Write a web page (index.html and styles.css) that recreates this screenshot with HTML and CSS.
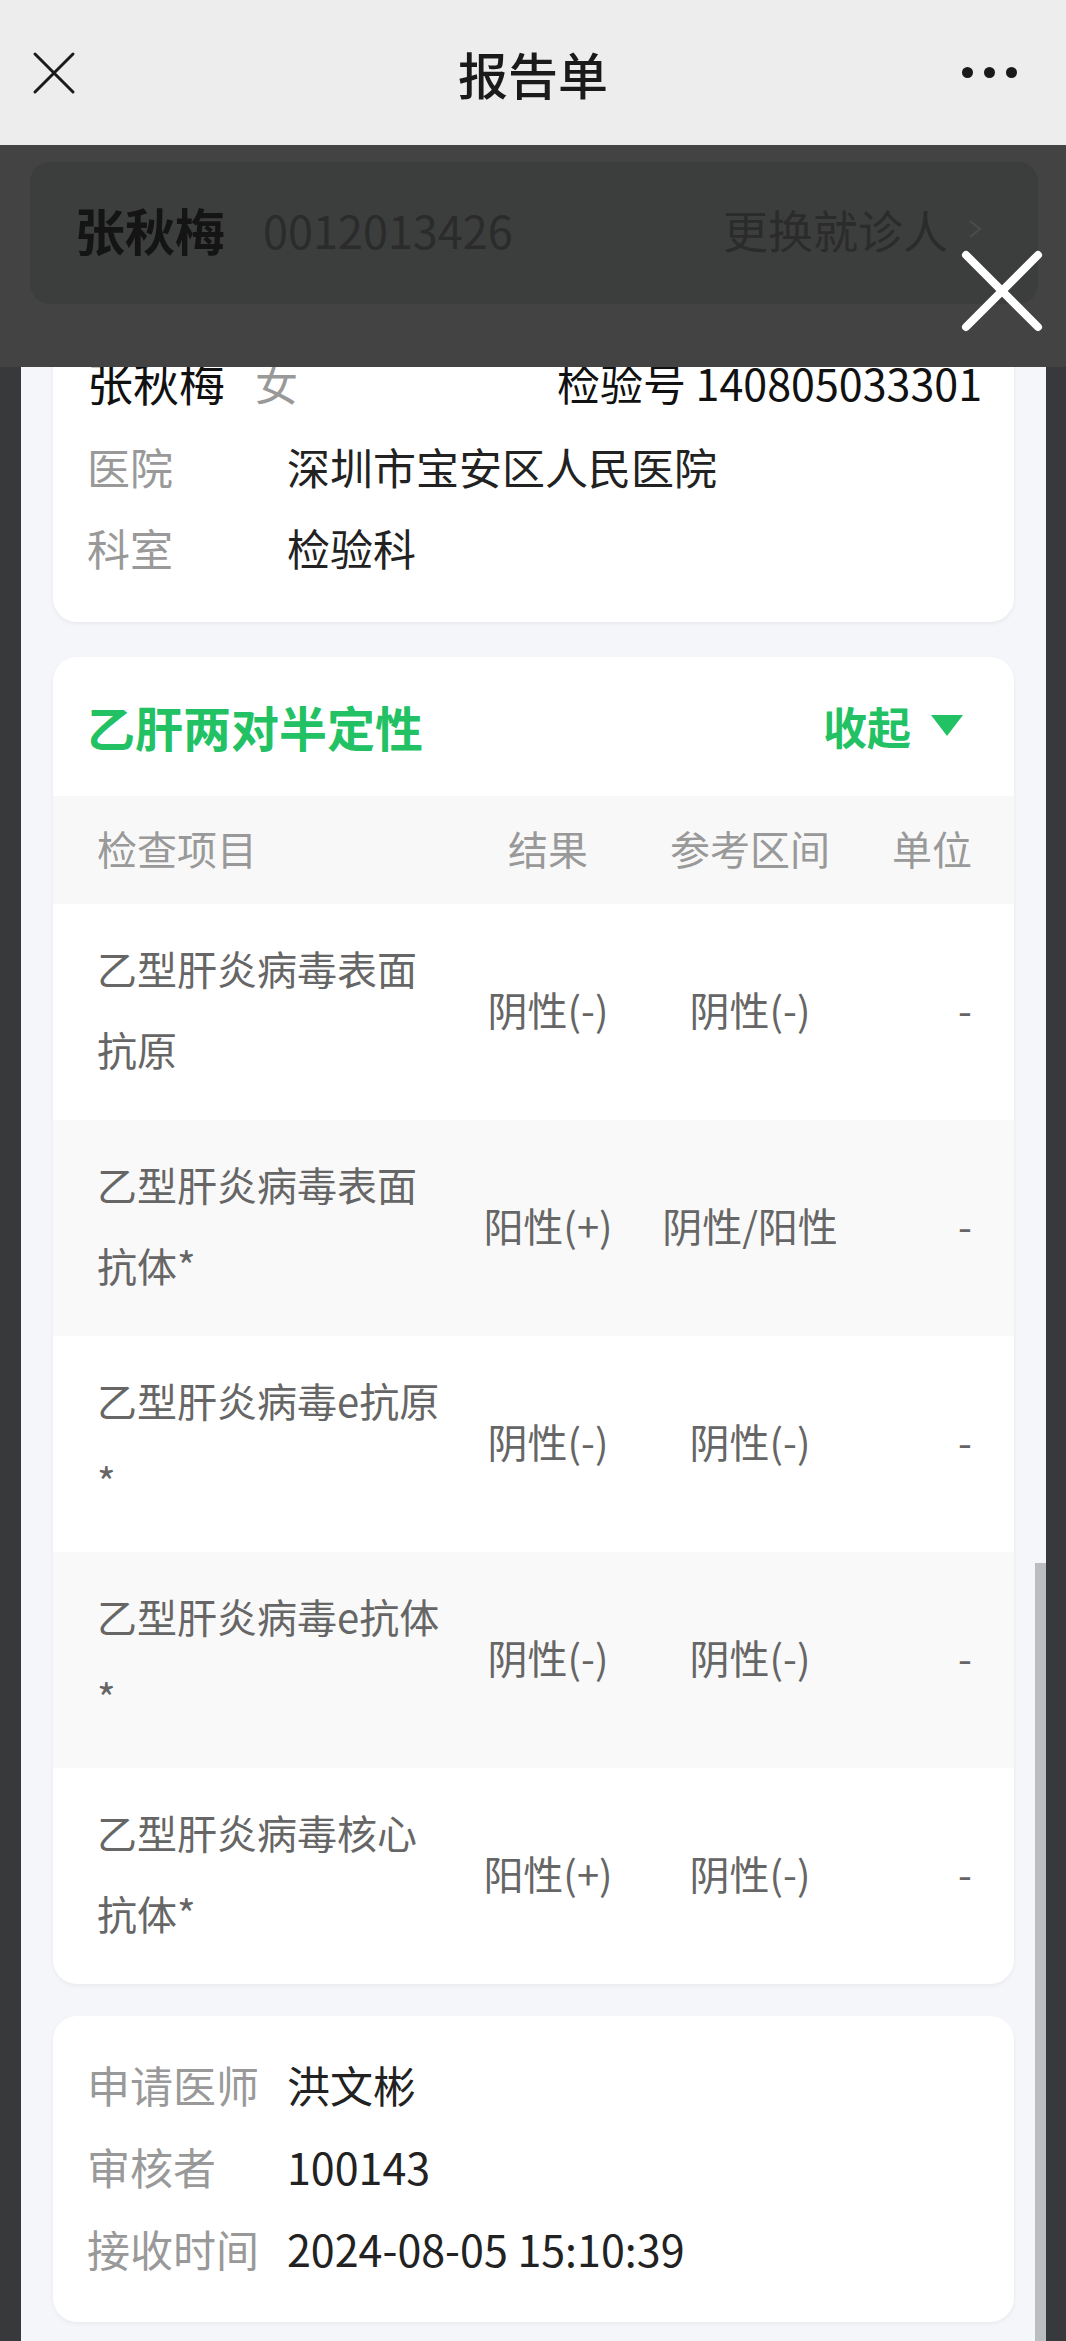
FILE: index.html
```html
<!DOCTYPE html>
<html lang="zh-CN">
  <head>
    <meta charset="UTF-8" />
    <meta name="viewport" content="width=device-width, initial-scale=1.0" />
    <title>报告单</title>
    <link rel="stylesheet" href="styles.css">
  </head>
  <body>
    <div class="top-bar">
      <span class="top-close">
        <svg width="44" height="44" viewBox="0 0 44 44">
          <path d="M3 3 L41 41 M41 3 L3 41" stroke="#1a1a1a" stroke-width="3" stroke-linecap="round" fill="none" />
        </svg>
      </span>
      <h1>报告单</h1>
      <span class="top-more"><i></i><i></i><i></i></span>
    </div>

    <div class="mask">
      <div class="patient-bar">
        <b class="patient-name">张秋梅</b>
        <span class="patient-id">0012013426</span>
        <span class="patient-switch">更换就诊人</span>
        <svg class="patient-arrow" width="14" height="20" viewBox="0 0 14 20">
          <path d="M2 2 L12 10 L2 18" stroke="#4b4c4c" stroke-width="2" fill="none" />
        </svg>
      </div>

      <button type="button" class="sheet-close">
        <svg width="86" height="86" viewBox="0 0 86 86">
          <path d="M7 7 L79 79 M79 7 L7 79" stroke="#fff" stroke-width="8" stroke-linecap="round" fill="none" />
        </svg>
      </button>

      <div class="sheet">
        <div class="sheet-body">
          <div class="card info-card card-patient">
            <div class="info-head">
              <span class="name">张秋梅</span>
              <span class="sex">女</span>
              <span class="lab-no">检验号 140805033301</span>
            </div>
            <div class="info-row">
              <span class="info-label">医院</span>
              <span class="info-value">深圳市宝安区人民医院</span>
            </div>
            <div class="info-row">
              <span class="info-label">科室</span>
              <span class="info-value">检验科</span>
            </div>
          </div>

          <div class="card result-card">
            <div class="result-head">
              <span class="result-title">乙肝两对半定性</span>
              <span class="result-toggle">收起</span>
            </div>
            <div class="result-table">
              <div class="table-head">
                <span>检查项目</span>
                <span class="col-mid">结果</span>
                <span class="col-mid">参考区间</span>
                <span class="col-unit">单位</span>
              </div>
              <div class="table-row">
                <span class="col-name">乙型肝炎病毒表面抗原</span>
                <span class="col-mid">阴性(-)</span>
                <span class="col-mid">阴性(-)</span>
                <span class="col-unit">-</span>
              </div>
              <div class="table-row">
                <span class="col-name">乙型肝炎病毒表面抗体*</span>
                <span class="col-mid">阳性(+)</span>
                <span class="col-mid">阴性/阳性</span>
                <span class="col-unit">-</span>
              </div>
              <div class="table-row">
                <span class="col-name">乙型肝炎病毒e抗原*</span>
                <span class="col-mid">阴性(-)</span>
                <span class="col-mid">阴性(-)</span>
                <span class="col-unit">-</span>
              </div>
              <div class="table-row">
                <span class="col-name">乙型肝炎病毒e抗体*</span>
                <span class="col-mid">阴性(-)</span>
                <span class="col-mid">阴性(-)</span>
                <span class="col-unit">-</span>
              </div>
              <div class="table-row">
                <span class="col-name">乙型肝炎病毒核心抗体*</span>
                <span class="col-mid">阳性(+)</span>
                <span class="col-mid">阴性(-)</span>
                <span class="col-unit">-</span>
              </div>
            </div>
          </div>

          <div class="card info-card card-doctor">
            <div class="info-row">
              <span class="info-label">申请医师</span>
              <span class="info-value">洪文彬</span>
            </div>
            <div class="info-row">
              <span class="info-label">审核者</span>
              <span class="info-value">100143</span>
            </div>
            <div class="info-row">
              <span class="info-label">接收时间</span>
              <span class="info-value">2024-08-05 15:10:39</span>
            </div>
          </div>
        </div>
        <div class="scroll-thumb"></div>
      </div>
    </div>
  </body>
</html>
```

FILE: styles.css
```css
body {
  margin: 0;
  padding: 0;
  font-family: "Noto Sans CJK SC", "Noto Sans", sans-serif;
  background-color: #38393b;
}

.top-bar {
  height: 145px;
  background-color: #ededed;
  display: grid;
  grid-template-columns: 1fr auto 1fr;
  align-items: center;
}

.top-close {
  display: flex;
  padding-left: 32px;
}

.top-bar h1 {
  margin: 0;
  font-size: 50px;
  font-weight: 500;
  line-height: 1;
  color: #1a1a1a;
}

.top-more {
  display: flex;
  justify-content: flex-end;
  gap: 11px;
  padding-right: 49px;
}

.top-more i {
  width: 11px;
  height: 11px;
  border-radius: 50%;
  background-color: #1a1a1a;
}

/* затемнённая область под шторкой */
.mask {
  position: relative;
  height: 2196px;
  box-sizing: border-box;
  padding-top: 17px;
  overflow: hidden;
  background: linear-gradient(#434343 0 222px, #38393b 222px);
}

.patient-bar {
  margin: 0 28px 0 30px;
  height: 142px;
  box-sizing: border-box;
  padding: 0 56px 8px 45px;
  border-radius: 20px;
  background-color: #3c3e3d;
  display: flex;
  align-items: center;
}

.patient-name {
  font-size: 50px;
  font-weight: 700;
  color: #141414;
}

.patient-id {
  margin-left: 38px;
  font-size: 45px;
  color: #2b2b2b;
}

.patient-switch {
  margin-left: auto;
  font-size: 45px;
  color: #2b2b2b;
}

.patient-arrow {
  margin-left: 20px;
}

.sheet-close {
  position: absolute;
  top: 103px;
  right: 21px;
  width: 86px;
  height: 86px;
  padding: 0;
  border: none;
  background: none;
  display: flex;
}

.sheet {
  position: relative;
  margin: 63px 20px 0 21px;
  height: 1974px;
  overflow: hidden;
  background-color: #f4f6f9;
}

.sheet-body {
  margin-top: -59px;
}

.card {
  margin: 0 32px;
  border-radius: 24px;
  background-color: #fff;
  box-shadow: 0 2px 4px rgba(0, 0, 0, 0.05);
}

.card-patient {
  margin-bottom: 35px;
}

.info-card {
  padding: 30px 32px 34px 34px;
  font-size: 43px;
}

.info-head {
  display: flex;
  align-items: baseline;
  line-height: 87px;
  color: #111;
}

.info-head .name {
  font-size: 46px;
}

.info-head .sex {
  margin-left: 30px;
  color: #999;
}

.info-head .lab-no {
  margin-left: auto;
}

.info-row {
  display: flex;
  line-height: 81px;
}

.card-doctor {
  padding-top: 27px;
  padding-bottom: 33px;
}

.card-doctor .info-row {
  line-height: 82px;
}

.info-label {
  flex: none;
  width: 200px;
  color: #999;
}

.info-value {
  color: #222;
}

.result-card {
  margin-bottom: 32px;
  overflow: hidden;
}

.result-head {
  height: 139px;
  box-sizing: border-box;
  padding: 0 51px 2px 34px;
  display: flex;
  align-items: center;
  color: #21c164;
}

.result-title {
  font-size: 48px;
  font-weight: 700;
}

.result-toggle {
  margin-left: auto;
  font-size: 44px;
  font-weight: 700;
  display: flex;
  align-items: center;
  gap: 20px;
}

.result-toggle::after {
  content: "";
  border-left: 16px solid transparent;
  border-right: 16px solid transparent;
  border-top: 21px solid currentColor;
}

.table-head,
.table-row {
  display: grid;
  grid-template-columns: 345px 212px 192px 126px;
  align-items: center;
  padding: 0 42px 0 44px;
  font-size: 40px;
}

.table-head {
  height: 108px;
  box-sizing: border-box;
  padding-bottom: 5px;
  background-color: #f8f8f8;
  color: #999;
}

.table-row {
  padding-top: 24px;
  padding-bottom: 30px;
  min-height: 162px;
  line-height: 81px;
  color: #666;
}

.table-row:nth-child(odd) {
  background-color: #f9f9f9;
}

.col-mid {
  text-align: center;
}

.col-unit {
  text-align: right;
}

.scroll-thumb {
  position: absolute;
  top: 1196px;
  right: 0;
  bottom: 0;
  width: 11px;
  background-color: #babec1;
}
```
